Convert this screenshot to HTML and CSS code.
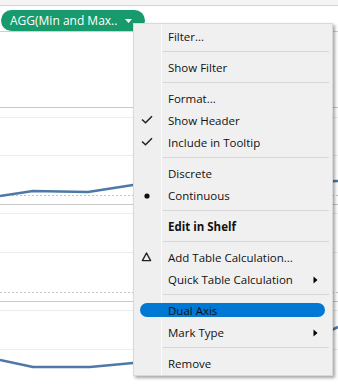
FILE: index.html
```html
<!DOCTYPE html>
<html>
<head>
    <title>Shelf pill menu</title>
    <link rel="stylesheet" href="styles.css">
</head>
<body>
    <div class="view">
        <div class="toolbar"></div>
        <div class="shelf">
            <div class="pill">
                <span>AGG(Min and Max..</span>
                <svg class="pill-caret" width="7" height="4" viewBox="0 0 7 4"><polygon points="0,0 7,0 3.5,4" fill="#fff"/></svg>
            </div>
        </div>

        <svg class="chart" width="338" height="357" viewBox="0 32 338 357">
            <g stroke="#ececec" stroke-width="1">
                <line x1="0" y1="117.5" x2="338" y2="117.5"/>
                <line x1="0" y1="155.5" x2="338" y2="155.5"/>
                <line x1="0" y1="213.5" x2="338" y2="213.5"/>
                <line x1="0" y1="252.5" x2="338" y2="252.5"/>
                <line x1="0" y1="310.5" x2="338" y2="310.5"/>
                <line x1="0" y1="349.5" x2="338" y2="349.5"/>
            </g>
            <g stroke="#c9c9c9" stroke-width="1">
                <line x1="0" y1="107.5" x2="338" y2="107.5"/>
                <line x1="0" y1="204.5" x2="338" y2="204.5"/>
                <line x1="0" y1="301.5" x2="338" y2="301.5"/>
            </g>
            <g stroke="#c4c4c4" stroke-width="1" stroke-dasharray="2 2">
                <line x1="0" y1="195.5" x2="338" y2="195.5"/>
                <line x1="0" y1="292.5" x2="338" y2="292.5"/>
            </g>
            <g fill="none" stroke="#4e79a7" stroke-width="2.5" stroke-linejoin="round">
                <polyline points="0,196 33,191 88,192 133,185 250,184 338,181"/>
                <polyline points="0,360 33,367 90,367 133,363 220,357 300,345 338,327"/>
            </g>
        </svg>

        <div class="menu">
            <div class="menu-item"><span class="mark"></span><span class="label">Filter...</span></div>
            <div class="menu-sep"></div>
            <div class="menu-item"><span class="mark"></span><span class="label">Show Filter</span></div>
            <div class="menu-sep"></div>
            <div class="menu-item"><span class="mark"></span><span class="label">Format...</span></div>
            <div class="menu-item">
                <svg class="mark" width="27" height="22" viewBox="0 0 27 22"><polyline points="8,9.5 11.5,12.8 18,6.2" fill="none" stroke="#222" stroke-width="1.5"/></svg>
                <span class="label">Show Header</span>
            </div>
            <div class="menu-item">
                <svg class="mark" width="27" height="22" viewBox="0 0 27 22"><polyline points="8,9.5 11.5,12.8 18,6.2" fill="none" stroke="#222" stroke-width="1.5"/></svg>
                <span class="label">Include in Tooltip</span>
            </div>
            <div class="menu-sep"></div>
            <div class="menu-item"><span class="mark"></span><span class="label">Discrete</span></div>
            <div class="menu-item">
                <svg class="mark" width="27" height="22" viewBox="0 0 27 22"><circle cx="13" cy="11" r="2.6" fill="#111"/></svg>
                <span class="label">Continuous</span>
            </div>
            <div class="menu-sep"></div>
            <div class="menu-item"><span class="mark"></span><span class="label bold">Edit in Shelf</span></div>
            <div class="menu-sep"></div>
            <div class="menu-item">
                <svg class="mark" width="27" height="22" viewBox="0 0 27 22"><polygon points="12.5,6 16.6,13.6 8.4,13.6" fill="none" stroke="#222" stroke-width="1.4" stroke-linejoin="round"/></svg>
                <span class="label">Add Table Calculation...</span>
            </div>
            <div class="menu-item">
                <span class="mark"></span><span class="label">Quick Table Calculation</span>
                <svg class="submenu" width="5" height="8" viewBox="0 0 5 8"><polygon points="0.5,0.5 4.5,4 0.5,7.5" fill="#000"/></svg>
            </div>
            <div class="menu-sep"></div>
            <div class="menu-item hot"><span class="mark"></span><span class="label">Dual Axis</span></div>
            <div class="menu-item">
                <span class="mark"></span><span class="label">Mark Type</span>
                <svg class="submenu" width="5" height="8" viewBox="0 0 5 8"><polygon points="0.5,0.5 4.5,4 0.5,7.5" fill="#000"/></svg>
            </div>
            <div class="menu-sep"></div>
            <div class="menu-item"><span class="mark"></span><span class="label">Remove</span></div>
        </div>
    </div>
</body>
</html>
```

FILE: styles.css
```css
* {
    margin: 0;
    padding: 0;
    box-sizing: border-box;
}

body {
    font-family: 'Open Sans', 'Liberation Sans', sans-serif;
    background: #fff;
    width: 338px;
    height: 389px;
    overflow: hidden;
}

.view {
    position: relative;
    width: 338px;
    height: 389px;
    overflow: hidden;
}

.toolbar {
    height: 6px;
    background: #f4f4f4;
    border-bottom: 1px solid #d3d3d3;
}

.shelf {
    height: 26px;
    padding: 2px 0 0 1px;
    border-bottom: 1px solid #d0d0d0;
}

.pill {
    display: inline-flex;
    align-items: center;
    gap: 8px;
    height: 21px;
    padding: 0 13px 0 9px;
    background: #179b6c;
    border-radius: 11px;
    color: #fff;
    font-size: 12px;
    line-height: 21px;
    white-space: nowrap;
}

.pill-caret {
    display: block;
    margin-top: 1px;
}

.chart {
    display: block;
}

/* context menu */
.menu {
    position: absolute;
    left: 133px;
    top: 23px;
    width: 200px;
    height: 353px;
    padding-top: 2px;
    border: 1px solid #d9d9d9;
    background: linear-gradient(to right, #efefef 27px, #fbfbfb 27px, #fbfbfb 28px, #f0f0f0 28px);
    box-shadow: 2px 2px 3px rgba(0, 0, 0, 0.35);
    font-size: 11.5px;
    color: #111;
}

.menu-item {
    position: relative;
    display: flex;
    align-items: center;
    height: 22px;
    white-space: nowrap;
}

.menu-item .mark {
    display: block;
    flex: none;
    width: 27px;
    height: 22px;
}

.menu-item .label {
    flex: 1;
    padding-left: 7px;
    line-height: 22px;
}

.menu-item .bold {
    font-weight: 700;
}

.menu-item .submenu {
    display: block;
    flex: none;
    margin-right: 14px;
}

.menu-item.hot::before {
    content: "";
    position: absolute;
    left: 6px;
    right: 7px;
    top: 3px;
    height: 14px;
    border-radius: 7px;
    background: #0078d4;
}

.menu-item.hot .mark,
.menu-item.hot .label {
    position: relative;
}

.menu-sep {
    height: 1px;
    margin: 3px 3px 5px 29px;
    background: #d6d6d6;
}
```
